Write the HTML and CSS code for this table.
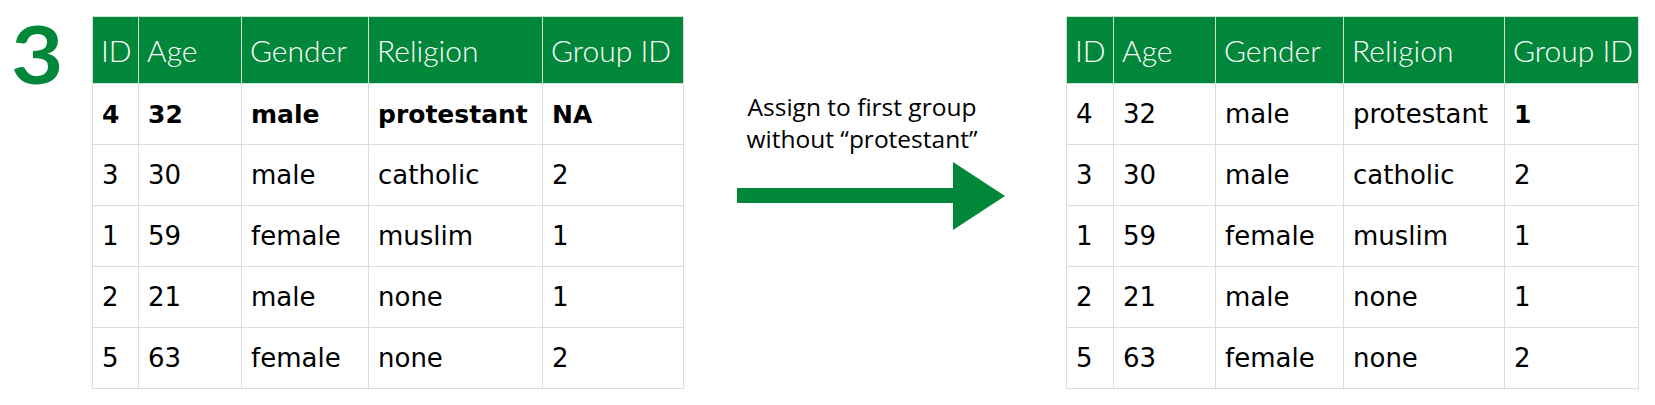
FILE: index.html
```html
<!DOCTYPE html>
<html>
<head>
<meta charset="utf-8">
<link rel="stylesheet" href="styles.css">
</head>
<body>
<div class="page">
  <div class="step"><span class="digit">3</span></div>
  <table class="data left">
    <colgroup><col style="width:46px"><col style="width:103px"><col style="width:127px"><col style="width:174px"><col style="width:141px"></colgroup>
    <thead><tr><th>ID</th><th>Age</th><th>Gender</th><th>Religion</th><th>Group ID</th></tr></thead>
    <tbody>
      <tr class="hl"><td>4</td><td>32</td><td>male</td><td>protestant</td><td>NA</td></tr>
      <tr><td>3</td><td>30</td><td>male</td><td>catholic</td><td>2</td></tr>
      <tr><td>1</td><td>59</td><td>female</td><td>muslim</td><td>1</td></tr>
      <tr><td>2</td><td>21</td><td>male</td><td>none</td><td>1</td></tr>
      <tr><td>5</td><td>63</td><td>female</td><td>none</td><td>2</td></tr>
    </tbody>
  </table>
  <div class="middle">
    <p class="caption">Assign to first group<br>without “protestant”</p>
    <svg class="arrow" width="268" height="68" viewBox="0 0 268 68">
      <rect x="0" y="26" width="218" height="15" fill="#01873a"/>
      <polygon points="216,0 268,34 216,68" fill="#01873a"/>
    </svg>
  </div>
  <table class="data right">
    <colgroup><col style="width:47px"><col style="width:102px"><col style="width:128px"><col style="width:161px"><col style="width:134px"></colgroup>
    <thead><tr><th>ID</th><th>Age</th><th>Gender</th><th>Religion</th><th>Group ID</th></tr></thead>
    <tbody>
      <tr><td>4</td><td>32</td><td>male</td><td>protestant</td><td class="b">1</td></tr>
      <tr><td>3</td><td>30</td><td>male</td><td>catholic</td><td>2</td></tr>
      <tr><td>1</td><td>59</td><td>female</td><td>muslim</td><td>1</td></tr>
      <tr><td>2</td><td>21</td><td>male</td><td>none</td><td>1</td></tr>
      <tr><td>5</td><td>63</td><td>female</td><td>none</td><td>2</td></tr>
    </tbody>
  </table>
</div>
</body>
</html>
```
FILE: styles.css
```css
html, body {
  margin: 0;
  padding: 0;
  background: #ffffff;
}
.page {
  display: flex;
  align-items: flex-start;
  width: 1655px;
  height: 405px;
  padding-top: 16px;
  box-sizing: border-box;
}
.step {
  width: 92px;
  flex: none;
  box-sizing: border-box;
  padding-left: 11px;
  margin-top: -3px;
  font-family: "Lato", sans-serif;
  font-weight: 700;
  font-size: 80px;
  line-height: 80px;
  color: #01873a;
}
.digit {
  display: inline-block;
  transform: scaleX(1.13);
  transform-origin: left center;
}
.data {
  flex: none;
  border-collapse: collapse;
  table-layout: fixed;
}
.data.left { width: 591px; }
.data.right { width: 572px; }
.data th {
  height: 67px;
  box-sizing: border-box;
  background: #01873a;
  color: #ffffff;
  font-family: "Lato", sans-serif;
  font-weight: 300;
  font-size: 30px;
  text-align: left;
  padding: 0 0 0 8px;
  border: 1px solid #cfe0d2;
  white-space: nowrap;
}
.data td {
  height: 61px;
  box-sizing: border-box;
  font-family: "DejaVu Sans", sans-serif;
  font-size: 26px;
  color: #000000;
  text-align: left;
  padding: 0 0 0 9px;
  border: 1px solid #dcdcdc;
  white-space: nowrap;
}
.data tr.hl td, .data td.b {
  font-weight: 700;
  font-size: 25px;
}
.middle {
  width: 382px;
  flex: none;
  display: flex;
  flex-direction: column;
  align-items: flex-start;
}
.caption {
  margin: 75px 0 0 48px;
  width: 260px;
  text-align: center;
  font-family: "Open Sans", sans-serif;
  font-size: 24.5px;
  line-height: 32px;
  color: #000000;
}
.arrow {
  display: block;
  margin: 7px 0 0 53px;
}
```
